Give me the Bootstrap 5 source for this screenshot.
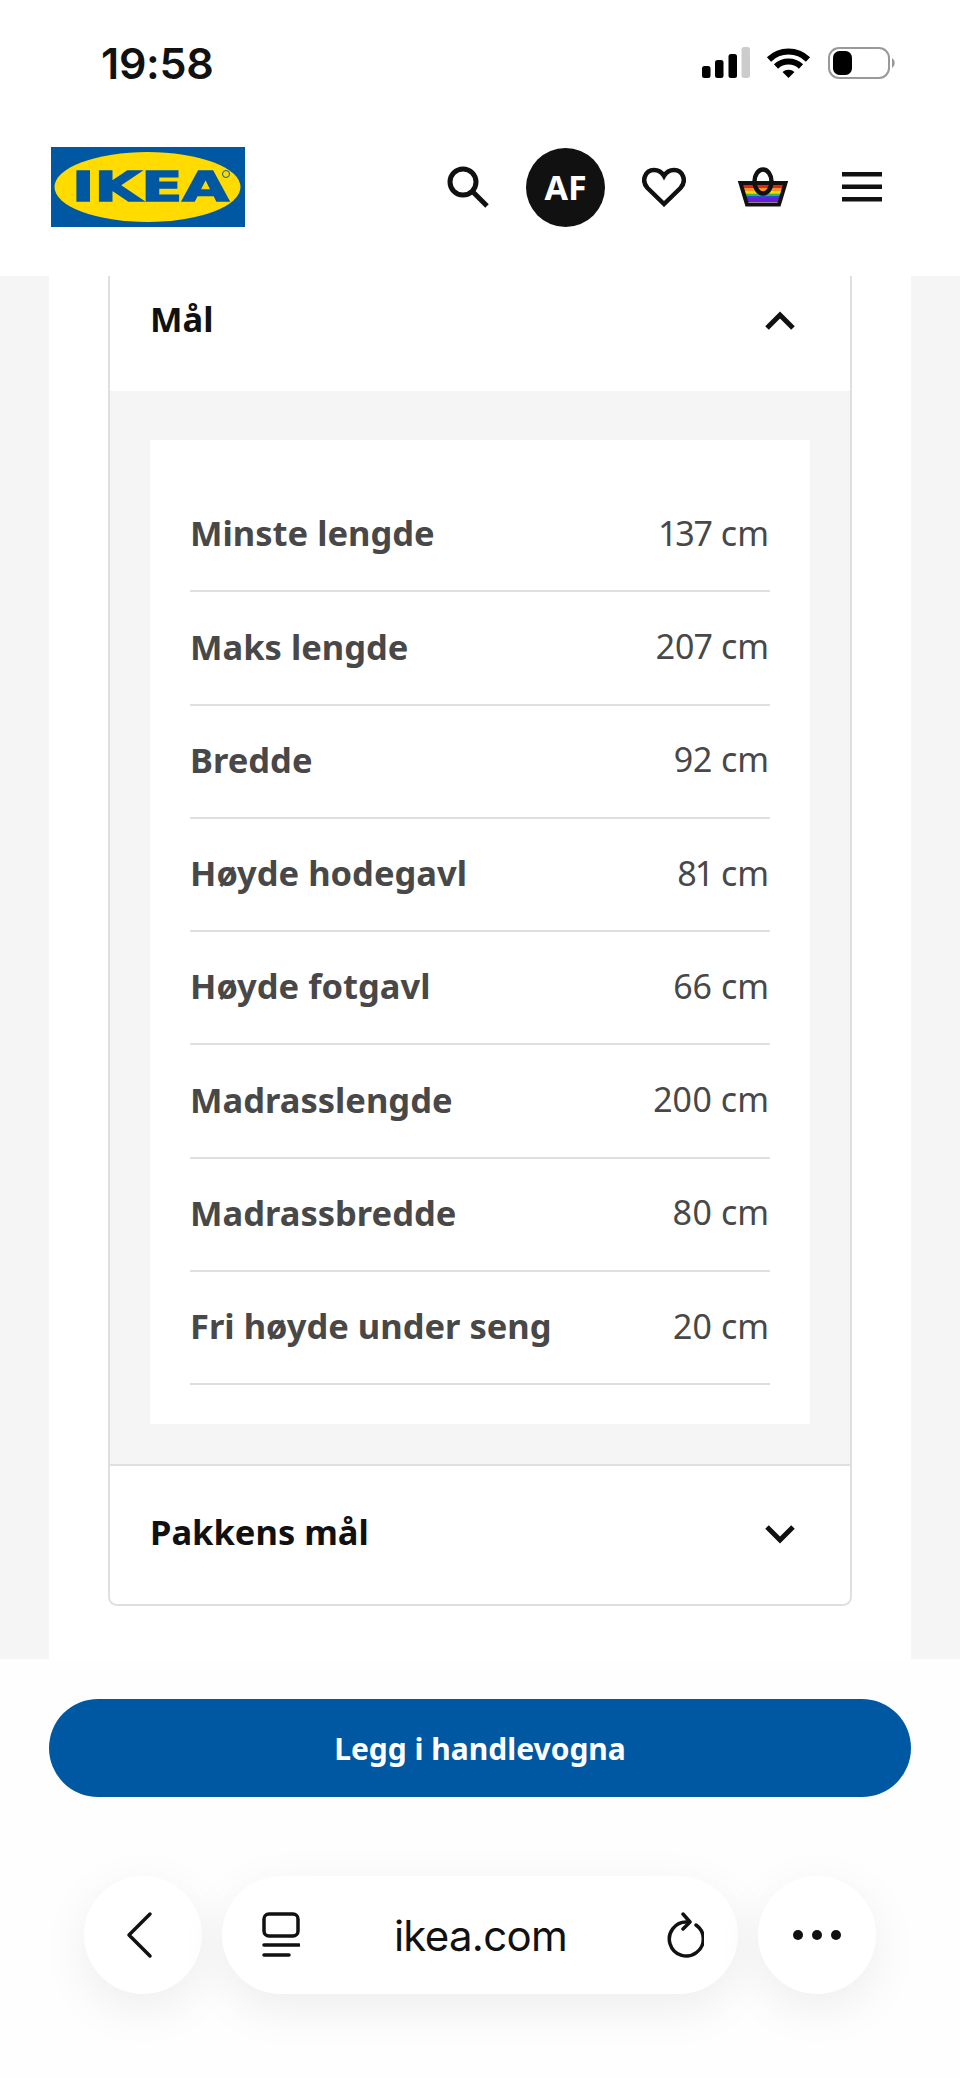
<!DOCTYPE html>
<html lang="nb">
<head>
    <meta charset="UTF-8">
    <meta name="viewport" content="width=device-width, initial-scale=1">
    <title>IKEA - Mål</title>
    <link href="https://cdn.jsdelivr.net/npm/bootstrap@5.3.0/dist/css/bootstrap.min.css" rel="stylesheet">
    <script src="https://cdn.jsdelivr.net/npm/bootstrap@5.3.0/dist/js/bootstrap.bundle.min.js"></script>
    <style>
        body {
            width: 960px;
            height: 2078px;
            overflow: hidden;
            background: #fff;
            font-family: "Noto Sans", sans-serif;
            color: #111;
        }
        .status-bar { height: 120px; padding: 41px 65px 0 101px; }
        .clock { font-family: Inter, sans-serif; font-size: 43px; font-weight: 600; line-height: 44px; letter-spacing: -.3px; }
        .site-header { height: 156px; padding: 0 78px 22px 51px; }
        .site-icons { gap: 37px; }
        .basket-icon { margin-left: 14px; }
        .avatar {
            width: 79px;
            height: 79px;
            background: #111;
            color: #fff;
            font-size: 34px;
            font-weight: 700;
        }
        .page-bg { height: 1383px; background: #f5f5f5; }
        .page-panel { height: 100%; margin: 0 49px; padding: 0 59px; background: #fff; }
        .fold { border: solid #dfdfdf; border-width: 0 2px 2px; border-radius: 0 0 9px 9px; }
        .fold-head { font-size: 34.5px; font-weight: 700; padding: 0 55px 0 40px; }
        .fold-open { height: 115px; padding-bottom: 27px; }
        .fold-open span { padding-bottom: 3px; }
        .fold-closed { height: 140px; border-top: 2px solid #dfdfdf; }
        .fold-closed span { padding-bottom: 7px; }
        .fold-body { background: #f5f5f5; padding: 49px 40px 40px; }
        .dim-list { background: #fff; padding: 39px 40px; }
        .dim-row {
            height: 113.3px;
            border-bottom: 2px solid #dfdfdf;
            font-size: 34px;
            color: #484848;
            padding-bottom: 3px;
        }
        .dim-row b { font-size: 34.5px; font-weight: 700; }
        .dim-row span { padding-right: 1px; font-variant-numeric: proportional-nums; }
        .page-foot { height: 419px; padding: 40px 49px 0; background: #fefefe; }
        .buy-btn {
            height: 98px;
            background: #0058a3;
            border: 0;
            color: #fff;
            font-size: 30px;
            font-weight: 700;
        }
        .safari-bar { margin-top: 79px; padding: 0 35px; gap: 20px; }
        .safari-round, .safari-url {
            height: 118px;
            background: #fff;
            box-shadow: 0 14px 50px rgba(0, 0, 0, .07);
        }
        .safari-round { width: 118px; }
        .safari-url { width: 516px; padding: 0 34px 0 40px; }
        .url-text { font-family: Inter, sans-serif; font-size: 42px; letter-spacing: -.7px; color: #111; margin-right: 3px; }
    </style>
</head>
<body>
    <div class="status-bar d-flex justify-content-between">
        <div class="clock">19:58</div>
        <svg width="195" height="35" viewBox="0 0 195 35" class="mt-1 flex-shrink-0">
            <!-- origin: 700, 46 -->
            <rect x="2" y="21" width="8.5" height="12" rx="2.5" fill="#000"/>
            <rect x="15" y="15" width="8.5" height="18" rx="2.5" fill="#000"/>
            <rect x="28.5" y="9" width="8.5" height="24" rx="2.5" fill="#000"/>
            <rect x="41.5" y="2" width="8.5" height="31" rx="2.5" fill="#ccc"/>
            <path d="M69 14.5a28 28 0 0 1 39 0M76 21.5a18 18 0 0 1 25 0" fill="none" stroke="#000" stroke-width="6"/>
            <path d="M82.500 27a9 9 0 0 1 12 0l-6 6z" fill="#000"/>
            <rect x="129" y="3" width="60" height="30" rx="10" fill="none" stroke="#999" stroke-width="2"/>
            <rect x="133" y="6" width="19" height="24" rx="6.500" fill="#000"/>
            <path d="M192 13a6 6 0 0 1 0 10z" fill="#999"/>
        </svg>
    </div>

    <header class="site-header d-flex align-items-center justify-content-between">
        <svg width="194" height="80" viewBox="0 0 194 80">
            <rect width="194" height="80" fill="#0058a3"/>
            <ellipse cx="96.500" cy="40" rx="93" ry="35" fill="#ffdb00"/>
            <text x="21" y="54" font-family="DejaVu Sans" font-weight="700" font-size="40" textLength="157" lengthAdjust="spacingAndGlyphs" fill="#0058a3" stroke="#0058a3" stroke-width="1.500">IKEA</text>
            <circle cx="175" cy="27" r="3.500" fill="none" stroke="#0058a3"/>
        </svg>
        <div class="site-icons d-flex align-items-center">
            <svg width="42" height="42" viewBox="0 0 42 42" fill="none" stroke="#111" stroke-width="5">
                <circle cx="16" cy="16" r="13"/>
                <path d="M25 25l15 15"/>
            </svg>
            <div class="avatar rounded-circle d-flex align-items-center justify-content-center">AF</div>
            <svg width="44" height="40" viewBox="0 0 44 40" fill="none" stroke="#111" stroke-width="4.500">
                <path d="M22 37L5.500 21C-1 14 3 3 12 3c4.500 0 8 2.500 10 6 2-3.500 5.500-6 10-6 9 0 13 11 6.500 18z"/>
            </svg>
            <svg width="52" height="40" viewBox="0 0 52 40" class="basket-icon">
                <clipPath id="basketInner"><path d="M5 16h42l-6 21H11z"/></clipPath>
                <g clip-path="url(#basketInner)">
                    <rect y="17" width="52" height="4" fill="#e5231b"/>
                    <rect y="21" width="52" height="3" fill="#f7931e"/>
                    <rect y="24" width="52" height="2.500" fill="#ffdb00"/>
                    <rect y="26.500" width="52" height="2.500" fill="#3cb54a"/>
                    <rect y="29" width="52" height="2" fill="#1b4fd6"/>
                    <rect y="31" width="52" height="4" fill="#6a1bd6"/>
                </g>
                <path d="M3.500 16h45L42 37.500H10z" fill="none" stroke="#111" stroke-width="4"/>
                <ellipse cx="26" cy="14.500" rx="8.500" ry="12" fill="none" stroke="#111" stroke-width="4.500"/>
            </svg>
            <svg width="40" height="32" viewBox="0 0 40 32" fill="#111" class="ms-3">
                <rect y="1" width="40" height="4.500"/>
                <rect y="13.500" width="40" height="4.500"/>
                <rect y="26" width="40" height="4.500"/>
            </svg>
        </div>
    </header>

    <main class="page-bg">
        <div class="page-panel">
            <section class="fold">
                <div class="fold-head fold-open d-flex align-items-center justify-content-between">
                    <span>Mål</span>
                    <svg width="30" height="20" viewBox="0 0 30 20" fill="none" stroke="#111" stroke-width="5"><path d="M2 18L15 5l13 13"/></svg>
                </div>
                <div class="fold-body">
                    <div class="dim-list">
                        <div class="dim-row d-flex align-items-center justify-content-between"><b>Minste lengde</b><span>137 cm</span></div>
                        <div class="dim-row d-flex align-items-center justify-content-between"><b>Maks lengde</b><span>207 cm</span></div>
                        <div class="dim-row d-flex align-items-center justify-content-between"><b>Bredde</b><span>92 cm</span></div>
                        <div class="dim-row d-flex align-items-center justify-content-between"><b>Høyde hodegavl</b><span>81 cm</span></div>
                        <div class="dim-row d-flex align-items-center justify-content-between"><b>Høyde fotgavl</b><span>66 cm</span></div>
                        <div class="dim-row d-flex align-items-center justify-content-between"><b>Madrasslengde</b><span>200 cm</span></div>
                        <div class="dim-row d-flex align-items-center justify-content-between"><b>Madrassbredde</b><span>80 cm</span></div>
                        <div class="dim-row d-flex align-items-center justify-content-between"><b>Fri høyde under seng</b><span>20 cm</span></div>
                    </div>
                </div>
                <div class="fold-head fold-closed d-flex align-items-center justify-content-between">
                    <span>Pakkens mål</span>
                    <svg width="30" height="20" viewBox="0 0 30 20" fill="none" stroke="#111" stroke-width="5"><path d="M2 2l13 13L28 2"/></svg>
                </div>
            </section>
        </div>
    </main>

    <footer class="page-foot">
        <button class="btn buy-btn rounded-pill w-100">Legg i handlevogna</button>
        <div class="safari-bar d-flex">
            <div class="safari-round rounded-circle d-flex align-items-center justify-content-center">
                <svg width="28" height="48" viewBox="0 0 28 48" fill="none" stroke="#111" stroke-width="3.500" stroke-linecap="round" stroke-linejoin="round" class="me-2"><path d="M25 3L4 24l21 21"/></svg>
            </div>
            <div class="safari-url rounded-pill d-flex align-items-center justify-content-between">
                <svg width="38" height="46" viewBox="0 0 38 46" fill="none" stroke="#111" stroke-width="3.500" stroke-linecap="round">
                    <rect x="2" y="2" width="34" height="22" rx="5"/>
                    <path d="M2 33h35M2 43h25"/>
                </svg>
                <span class="url-text">ikea.com</span>
                <svg width="40" height="46" viewBox="0 0 40 46" fill="none" stroke="#111" stroke-width="3.500" stroke-linecap="round" stroke-linejoin="round">
                    <path d="M23 10A17 17 0 1 0 32 13"/>
                    <path d="M19 2l7 8-7 7"/>
                </svg>
            </div>
            <div class="safari-round rounded-circle d-flex align-items-center justify-content-center">
                <svg width="48" height="10" viewBox="0 0 48 10" fill="#111"><circle cx="5" cy="5" r="5"/><circle cx="24" cy="5" r="5"/><circle cx="43" cy="5" r="5"/></svg>
            </div>
        </div>
    </footer>
</body>
</html>
